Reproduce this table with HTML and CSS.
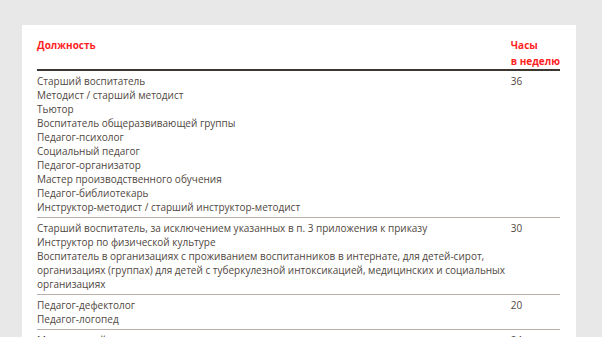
FILE: index.html
```
<!DOCTYPE html>
<html lang="ru">
<head>
<meta charset="utf-8">
<link rel="stylesheet" href="styles.css">
</head>
<body>
<div class="page">
  <div class="card">
    <table class="hours">
      <thead>
        <tr>
          <th class="pos">Должность</th>
          <th class="num">Часы<br>в неделю</th>
        </tr>
      </thead>
      <tbody>
        <tr>
          <td class="pos">Старший воспитатель<br>Методист / старший методист<br>Тьютор<br>Воспитатель общеразвивающей группы<br>Педагог-психолог<br>Социальный педагог<br>Педагог-организатор<br>Мастер производственного обучения<br>Педагог-библиотекарь<br>Инструктор-методист / старший инструктор-методист</td>
          <td class="num">36</td>
        </tr>
        <tr>
          <td class="pos">Старший воспитатель, за исключением указанных в п. 3 приложения к приказу<br>Инструктор по физической культуре<br>Воспитатель в организациях с проживанием воспитанников в интернате, для детей-сирот, организациях (группах) для детей с туберкулезной интоксикацией, медицинских и социальных организациях</td>
          <td class="num">30</td>
        </tr>
        <tr>
          <td class="pos">Педагог-дефектолог<br>Педагог-логопед</td>
          <td class="num">20</td>
        </tr>
        <tr>
          <td class="pos">Музыкальный руководитель</td>
          <td class="num">24</td>
        </tr>
      </tbody>
    </table>
  </div>
</div>
</body>
</html>
```

FILE: styles.css
```
html, body {
  margin: 0;
  padding: 0;
  background: #e8e8e8;
  height: 100%;
  overflow: hidden;
}
.page {
  padding: 25px 26px 0 22px;
}
.card {
  background: #fff;
  padding: 11px 16px 40px 15px;
  min-height: 400px;
}
.hours {
  width: 100%;
  border-collapse: collapse;
  font-family: "Open Sans", sans-serif;
  font-size: 10px;
  line-height: 14px;
  color: #504741;
}
.hours th {
  text-align: left;
  vertical-align: top;
  color: #ff1f1f;
  font-weight: 700;
  font-size: 10px;
  line-height: 16px;
  padding: 1px 0 0;
  white-space: nowrap;
  border-bottom: 2px solid #3e3631;
}
.hours td {
  vertical-align: top;
  padding: 3px 0 3px;
  border-bottom: 1px solid #b9b0a9;
}
.hours .num {
  width: 48px;
}
.hours td.pos {
  padding-right: 4px;
}
```
